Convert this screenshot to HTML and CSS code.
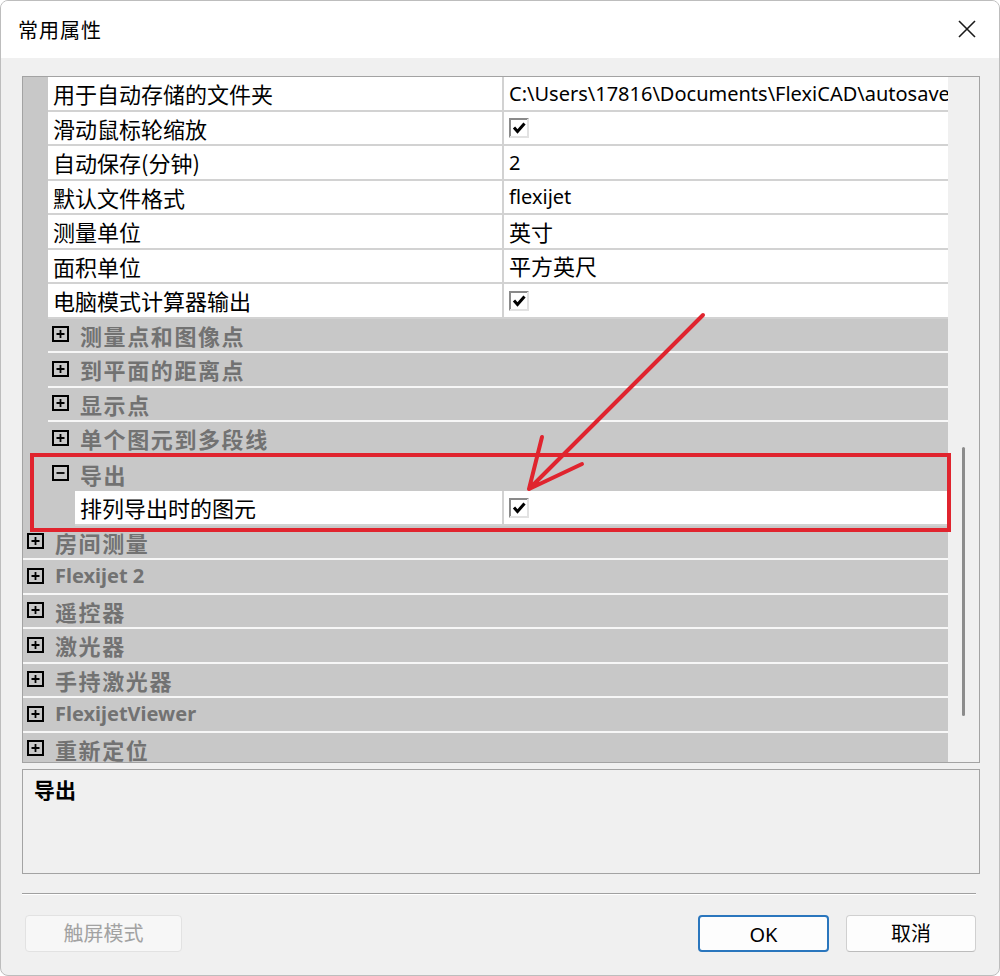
FILE: index.html
```html
<!DOCTYPE html>
<html lang="zh-CN">
<head>
<meta charset="utf-8">
<title>常用属性</title>
<link rel="stylesheet" href="styles.css">
</head>
<body>
<div class="dialog">
  <div class="titlebar">
    <span class="title">常用属性</span>
    <span class="close" aria-label="关闭">
      <svg width="20" height="20" viewBox="0 0 20 20"><path d="M2 2 L18 18 M18 2 L2 18" stroke="#1a1a1a" stroke-width="1.6" fill="none"/></svg>
    </span>
  </div>
  <div class="content">
    <div class="grid">
      <div class="rows">
        <div class="row prop"><div class="margin"></div><div class="name">用于自动存储的文件夹</div><div class="value latin">C:\Users\17816\Documents\FlexiCAD\autosave</div></div>
        <div class="row prop"><div class="margin"></div><div class="name">滑动鼠标轮缩放</div><div class="value"><svg class="chk" width="20" height="20" viewBox="0 0 20 20"><rect x="0" y="0" width="20" height="20" fill="#fff"/><path d="M1 19.5 V1 H19.5" stroke="#8a8a8a" stroke-width="2" fill="none"/><path d="M1 19 H19 V1" stroke="#e2e2e2" stroke-width="2" fill="none"/><path d="M5 9.5 L8.5 13.5 L15.5 5.5" stroke="#000" stroke-width="3" fill="none"/></svg></div></div>
        <div class="row prop"><div class="margin"></div><div class="name">自动保存(分钟)</div><div class="value latin">2</div></div>
        <div class="row prop"><div class="margin"></div><div class="name">默认文件格式</div><div class="value latin">flexijet</div></div>
        <div class="row prop"><div class="margin"></div><div class="name">测量单位</div><div class="value">英寸</div></div>
        <div class="row prop"><div class="margin"></div><div class="name">面积单位</div><div class="value">平方英尺</div></div>
        <div class="row prop"><div class="margin"></div><div class="name">电脑模式计算器输出</div><div class="value"><svg class="chk" width="20" height="20" viewBox="0 0 20 20"><rect x="0" y="0" width="20" height="20" fill="#fff"/><path d="M1 19.5 V1 H19.5" stroke="#8a8a8a" stroke-width="2" fill="none"/><path d="M1 19 H19 V1" stroke="#e2e2e2" stroke-width="2" fill="none"/><path d="M5 9.5 L8.5 13.5 L15.5 5.5" stroke="#000" stroke-width="3" fill="none"/></svg></div></div>
        <div class="row cat l2"><div class="margin"></div><div class="cat-cell"><svg class="tog" width="17" height="16" viewBox="0 0 17 16"><rect x="1" y="1" width="15" height="14" fill="none" stroke="#000" stroke-width="2"/><path d="M4.5 8 H12.5 M8.5 4 V12" stroke="#000" stroke-width="1.8"/></svg><span class="cat-name">测量点和图像点</span></div></div>
        <div class="row cat l2"><div class="margin"></div><div class="cat-cell"><svg class="tog" width="17" height="16" viewBox="0 0 17 16"><rect x="1" y="1" width="15" height="14" fill="none" stroke="#000" stroke-width="2"/><path d="M4.5 8 H12.5 M8.5 4 V12" stroke="#000" stroke-width="1.8"/></svg><span class="cat-name">到平面的距离点</span></div></div>
        <div class="row cat l2"><div class="margin"></div><div class="cat-cell"><svg class="tog" width="17" height="16" viewBox="0 0 17 16"><rect x="1" y="1" width="15" height="14" fill="none" stroke="#000" stroke-width="2"/><path d="M4.5 8 H12.5 M8.5 4 V12" stroke="#000" stroke-width="1.8"/></svg><span class="cat-name">显示点</span></div></div>
        <div class="row cat l2"><div class="margin"></div><div class="cat-cell"><svg class="tog" width="17" height="16" viewBox="0 0 17 16"><rect x="1" y="1" width="15" height="14" fill="none" stroke="#000" stroke-width="2"/><path d="M4.5 8 H12.5 M8.5 4 V12" stroke="#000" stroke-width="1.8"/></svg><span class="cat-name">单个图元到多段线</span></div></div>
        <div class="row cat l2 open"><div class="margin"></div><div class="cat-cell"><svg class="tog" width="17" height="16" viewBox="0 0 17 16"><rect x="1" y="1" width="15" height="14" fill="none" stroke="#000" stroke-width="2"/><path d="M4.5 8 H12.5" stroke="#000" stroke-width="1.8"/></svg><span class="cat-name">导出</span></div></div>
        <div class="row prop l3"><div class="margin"></div><div class="name">排列导出时的图元</div><div class="value"><svg class="chk" width="20" height="20" viewBox="0 0 20 20"><rect x="0" y="0" width="20" height="20" fill="#fff"/><path d="M1 19.5 V1 H19.5" stroke="#8a8a8a" stroke-width="2" fill="none"/><path d="M1 19 H19 V1" stroke="#e2e2e2" stroke-width="2" fill="none"/><path d="M5 9.5 L8.5 13.5 L15.5 5.5" stroke="#000" stroke-width="3" fill="none"/></svg></div></div>
        <div class="row cat l1"><div class="cat-cell"><svg class="tog" width="17" height="16" viewBox="0 0 17 16"><rect x="1" y="1" width="15" height="14" fill="none" stroke="#000" stroke-width="2"/><path d="M4.5 8 H12.5 M8.5 4 V12" stroke="#000" stroke-width="1.8"/></svg><span class="cat-name">房间测量</span></div></div>
        <div class="row cat l1"><div class="cat-cell"><svg class="tog" width="17" height="16" viewBox="0 0 17 16"><rect x="1" y="1" width="15" height="14" fill="none" stroke="#000" stroke-width="2"/><path d="M4.5 8 H12.5 M8.5 4 V12" stroke="#000" stroke-width="1.8"/></svg><span class="cat-name latin-cat">Flexijet 2</span></div></div>
        <div class="row cat l1"><div class="cat-cell"><svg class="tog" width="17" height="16" viewBox="0 0 17 16"><rect x="1" y="1" width="15" height="14" fill="none" stroke="#000" stroke-width="2"/><path d="M4.5 8 H12.5 M8.5 4 V12" stroke="#000" stroke-width="1.8"/></svg><span class="cat-name">遥控器</span></div></div>
        <div class="row cat l1"><div class="cat-cell"><svg class="tog" width="17" height="16" viewBox="0 0 17 16"><rect x="1" y="1" width="15" height="14" fill="none" stroke="#000" stroke-width="2"/><path d="M4.5 8 H12.5 M8.5 4 V12" stroke="#000" stroke-width="1.8"/></svg><span class="cat-name">激光器</span></div></div>
        <div class="row cat l1"><div class="cat-cell"><svg class="tog" width="17" height="16" viewBox="0 0 17 16"><rect x="1" y="1" width="15" height="14" fill="none" stroke="#000" stroke-width="2"/><path d="M4.5 8 H12.5 M8.5 4 V12" stroke="#000" stroke-width="1.8"/></svg><span class="cat-name">手持激光器</span></div></div>
        <div class="row cat l1"><div class="cat-cell"><svg class="tog" width="17" height="16" viewBox="0 0 17 16"><rect x="1" y="1" width="15" height="14" fill="none" stroke="#000" stroke-width="2"/><path d="M4.5 8 H12.5 M8.5 4 V12" stroke="#000" stroke-width="1.8"/></svg><span class="cat-name latin-cat">FlexijetViewer</span></div></div>
        <div class="row cat l1"><div class="cat-cell"><svg class="tog" width="17" height="16" viewBox="0 0 17 16"><rect x="1" y="1" width="15" height="14" fill="none" stroke="#000" stroke-width="2"/><path d="M4.5 8 H12.5 M8.5 4 V12" stroke="#000" stroke-width="1.8"/></svg><span class="cat-name">重新定位</span></div></div>
      </div>
      <div class="vscroll"><div class="thumb"></div></div>
    </div>
    <div class="desc"><span class="desc-title">导出</span></div>
    <div class="sep"></div>
    <div class="buttons">
      <button class="btn disabled" disabled>触屏模式</button>
      <div class="spacer"></div>
      <button class="btn focused">OK</button>
      <button class="btn">取消</button>
    </div>
  </div>
  <svg class="annot" width="1000" height="976" viewBox="0 0 1000 976">
    <rect x="32" y="455" width="917" height="75" fill="none" stroke="#e0242e" stroke-width="4"/>
    <path d="M703 315 L529 489 M529 489 L542 437 M529 489 L582 464" stroke="#e0242e" stroke-width="4" stroke-linecap="round" fill="none"/>
  </svg>
</div>
</body>
</html>
```
FILE: styles.css
```css
* { box-sizing: border-box; }
html, body { margin: 0; padding: 0; background: #ffffff; }
body {
  font-family: "Noto Sans", "Noto Sans CJK SC", sans-serif;
  color: #000;
  width: 1000px;
  height: 976px;
  overflow: hidden;
}
.dialog {
  position: relative;
  width: 1000px;
  height: 976px;
  border: 1px solid #bdbdbd;
  border-radius: 8px;
  background: #f0f0f0;
  overflow: hidden;
  display: flex;
  flex-direction: column;
}
.titlebar {
  height: 57px;
  flex: none;
  background: #ffffff;
  display: flex;
  align-items: center;
  padding: 0 22px 0 17px;
}
.title {
  font-family: "Noto Sans CJK SC", sans-serif;
  font-size: 20px;
  letter-spacing: 1px;
  flex: 1;
  line-height: 24px;
}
.close { display: flex; width: 20px; height: 20px; margin-top: -2px; }

.content {
  flex: 1;
  display: flex;
  flex-direction: column;
  padding: 18px 19px 0 21px;
}
.grid {
  height: 687px;
  flex: none;
  border: 1px solid #a3a3a3;
  display: flex;
  background: #f0f0f0;
}
.rows {
  width: 925px;
  height: 685px;
  overflow: hidden;
  flex: none;
}
.row {
  height: 34.5px;
  display: flex;
  font-family: "Noto Sans CJK SC", sans-serif;
  font-size: 22px;
  line-height: 33px;
}
.margin { background: #c8c8c8; width: 25px; flex: none; }
.row.l3 .margin { width: 52px; }
.name {
  width: 456px;
  flex: none;
  background: #fff;
  padding-left: 5px;
  border-right: 2px solid #d2d2d2;
  border-bottom: 2px solid #d2d2d2;
  white-space: nowrap;
  overflow: hidden;
}
.row.l3 .name { width: 429px; }
.value {
  flex: 1;
  background: #fff;
  padding-left: 5px;
  border-bottom: 2px solid #d2d2d2;
  white-space: nowrap;
  overflow: hidden;
  display: flex;
  align-items: center;
}
.value.latin {
  font-family: "Noto Sans", "Noto Sans CJK SC", sans-serif;
  font-size: 20px;
}
.chk { display: block; margin-top: 1px; }
.cat .cat-cell {
  flex: 1;
  background: #c8c8c8;
  border-bottom: 2px solid #f7f7f7;
  display: flex;
  align-items: center;
  padding-left: 4px;
}
.row.open .cat-cell { border-bottom: none; }
.tog { flex: none; margin-right: 11px; margin-top: -1px; }
.cat-name {
  font-weight: bold;
  color: #727272;
  letter-spacing: 1.6px;
  line-height: 30px;
}
.cat-name.latin-cat {
  font-family: "Noto Sans", sans-serif;
  font-size: 20px;
  letter-spacing: 0;
}
.vscroll {
  flex: 1;
  background: #f0f0f0;
  padding: 370px 0 0 14px;
}
.thumb {
  width: 3px;
  height: 269px;
  background: #8c8c8c;
  border-radius: 2px;
}

.desc {
  margin-top: 6px;
  height: 105px;
  flex: none;
  border: 1px solid #a3a3a3;
  background: #f0f0f0;
  padding: 7px 11px;
}
.desc-title {
  font-family: "Noto Sans CJK SC", sans-serif;
  font-weight: bold;
  font-size: 21px;
  line-height: 24px;
}
.sep {
  margin-top: 19px;
  height: 2px;
  margin-right: 4px;
  border-top: 1px solid #a0a0a0;
  border-bottom: 1px solid #ffffff;
}
.buttons {
  margin-top: 20px;
  display: flex;
  align-items: center;
  gap: 17px;
  padding-left: 3px;
  padding-right: 4px;
}
.spacer { flex: 1; }
.btn {
  height: 37px;
  width: 130px;
  background: #fdfdfd;
  border: 1px solid #d0d0d0;
  border-bottom-color: #bcbcbc;
  border-radius: 4px;
  font-family: "Noto Sans", "Noto Sans CJK SC", sans-serif;
  font-size: 20px;
  color: #000;
  padding: 0;
  line-height: 35px;
}
.btn.disabled {
  width: 157px;
  color: #a2a2a2;
  background: #f7f7f7;
  border-color: #e2e2e2;
}
.btn.focused {
  width: 131px;
  border: 2px solid #2a76bd;
}
.annot {
  position: absolute;
  left: -1px;
  top: -1px;
  pointer-events: none;
}
```
